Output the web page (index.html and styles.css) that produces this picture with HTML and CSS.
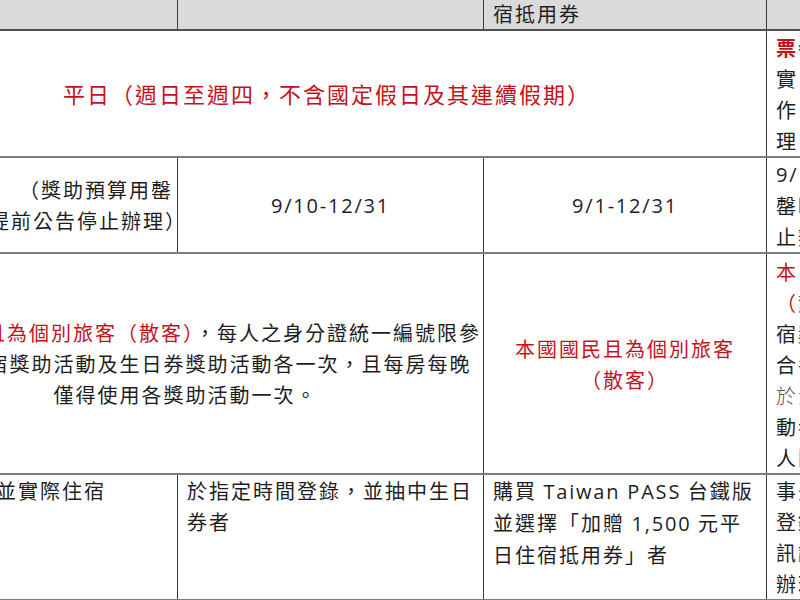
FILE: index.html
```html
<!DOCTYPE html>
<html lang="zh-Hant">
<head>
<meta charset="utf-8">
<title>住宿獎助活動比較</title>
<link rel="stylesheet" href="styles.css">
</head>
<body>
<div class="viewport">
  <table class="grid">
    <colgroup>
      <col class="c1"><col class="c2"><col class="c3"><col class="c4">
    </colgroup>
    <tr class="head">
      <td>平日住宿獎助</td>
      <td>生日券獎助</td>
      <td>加贈 <span class="lat">1,500</span> 元平日住<br>宿抵用券</td>
      <td>其他說明</td>
    </tr>
    <tr>
      <td colspan="3" class="center title red">平日（週日至週四，不含國定假日及其連續假期）</td>
      <td class="side pad1"><span class="red bold">票券使用說明：</span><br>實 際入住時依旅宿業者<br>作 業規定辦理，詳細辦<br>理 方式請洽旅宿業者。</td>
    </tr>
    <tr>
      <td class="budget">（獎助預算用罄<br>時將提前公告停止辦理<span class="tail">）</span></td>
      <td class="center"><span class="lat">9/10-12/31</span></td>
      <td class="center"><span class="lat">9/1-12/31</span></td>
      <td class="side"><span class="lat">9/1-12/31</span>（獎助預算用<br>罄時將提前公告停<br>止辦理）</td>
    </tr>
    <tr>
      <td colspan="2" class="center nowrap"><span class="red">本國國民且為個別旅客（散客）</span>，每人之身分證統一編號限參<br>加平日住宿獎助活動及生日券獎助活動各一次，且每房每晚<br>僅得使用各獎助活動一次。</td>
      <td class="center red">本國國民且為個別旅客<br>（散客）</td>
      <td class="side pad2"><span class="red">本 國國民且為個別旅客</span><br><span class="red">（散客）</span>，可同時參加住<br>宿獎助活動，惟須符<br>合各活動規定，並<br><span class="soft">於活動期間內</span>參加活<br>動者，每房每晚每<br>人限用一次。</td>
    </tr>
    <tr class="last">
      <td class="top lead">於期間入住並實際住宿</td>
      <td class="top">於指定時間登錄，並抽中生日<br>券者</td>
      <td class="top">購買 <span class="lat">Taiwan PASS</span> 台鐵版<br>並選擇「加贈 <span class="lat">1,500</span> 元平<br>日住宿抵用券」者</td>
      <td class="side">事先於活動網站完成<br>登錄並取得憑證，相關資<br>訊請依公告之規定<br>辦理。</td>
    </tr>
  </table>
</div>
</body>
</html>
```

FILE: styles.css
```css
html, body {
  margin: 0;
  padding: 0;
  background: #ffffff;
}

.viewport {
  width: 800px;
  height: 600px;
  overflow: hidden;
}

.grid {
  border-collapse: collapse;
  table-layout: fixed;
  width: 1129px;
  margin-left: -113px;
  margin-top: -36px;
  font-family: "Noto Sans CJK TC", "Noto Sans", sans-serif;
  font-size: 20px;
  line-height: 31px;
  letter-spacing: 2px;
  color: #1e1e1e;
}

.c1 { width: 290px; }
.c2 { width: 306px; }
.c3 { width: 283px; }
.c4 { width: 250px; }

.grid td {
  border-left: 1px solid #3a3a3a;
  border-right: 1px solid #3a3a3a;
  border-top: 2px solid #7c7c7c;
  border-bottom: 2px solid #7c7c7c;
  padding: 0 9px;
  vertical-align: middle;
  text-align: left;
}

.head td {
  background: #dadada;
  vertical-align: top;
  border-bottom: 2px solid #505050;
}

.center {
  text-align: center !important;
}

.nowrap {
  white-space: nowrap;
}

.grid td.budget {
  white-space: nowrap;
  text-align: right;
  padding-right: 4px;
}

.tail {
  display: inline-block;
  margin-right: -14px;
}

.grid td.top {
  vertical-align: top;
  padding-top: 0;
}

.grid td.lead {
  text-indent: -11px;
}

.grid td.side {
  vertical-align: top;
  white-space: nowrap;
  padding-top: 0;
}

.grid td.pad1 {
  padding-top: 1px;
}

.grid td.pad2 {
  padding-top: 2px;
}

.title {
  font-size: 22px;
  letter-spacing: 2px;
}

.red {
  color: #c5121a;
}

.bold {
  font-weight: 700;
}

.soft {
  color: #555555;
  font-weight: 300;
}

.lat {
  font-family: "Open Sans", "Noto Sans", sans-serif;
  letter-spacing: 1.8px;
}
```
